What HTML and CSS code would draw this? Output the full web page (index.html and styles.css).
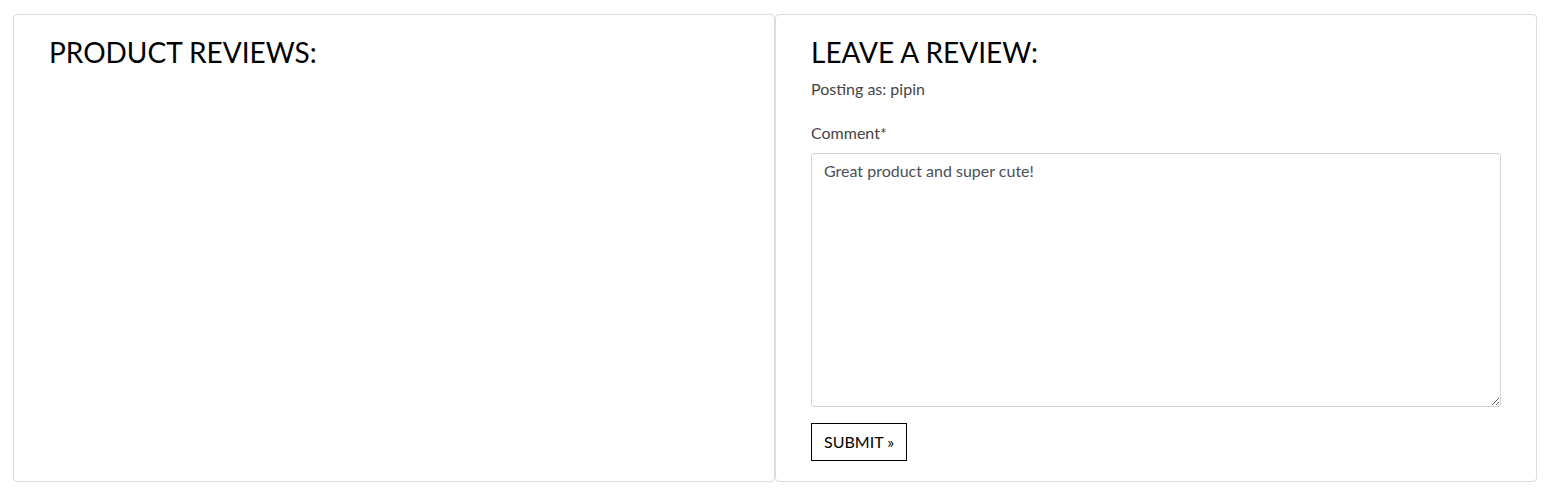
FILE: index.html
```html
<!DOCTYPE html>
<html lang="en">
<head>
<meta charset="utf-8">
<title>Reviews</title>
<link rel="stylesheet" href="styles.css">
</head>
<body>
<div class="wrap">
  <section class="card">
    <h2 class="title">PRODUCT REVIEWS:</h2>
  </section>
  <section class="card">
    <h2 class="title">LEAVE A REVIEW:</h2>
    <p class="posting">Posting as: pipin</p>
    <form class="form">
      <label class="label" for="comment">Comment*</label>
      <textarea id="comment" class="textarea">Great product and super cute!</textarea>
      <button type="button" class="btn">SUBMIT &raquo;</button>
    </form>
  </section>
</div>
</body>
</html>
```
FILE: styles.css
```css
* { box-sizing: border-box; }
html, body { margin: 0; padding: 0; background: #fff; }
body {
  font-family: Lato, "Open Sans", sans-serif;
  font-size: 16px;
  line-height: 1.5;
  color: #444;
}
.wrap {
  display: grid;
  grid-template-columns: 762px 762px;
  padding: 14px 13px;
}
.card {
  border: 1px solid #dcdcdc;
  border-radius: 4px;
  padding: 21px 35px 20px;
}
.title {
  margin: 0;
  font-size: 28px;
  line-height: 1.2;
  font-weight: 400;
  color: #000;
}
.posting {
  margin: 7px 0 0;
}
.form {
  display: flex;
  flex-direction: column;
  align-items: flex-start;
  margin-top: 20px;
}
.label {
  display: block;
  margin-bottom: 8px;
}
.textarea {
  display: block;
  width: 100%;
  height: 254px;
  border: 1px solid #ced4da;
  border-radius: 3px;
  padding: 5px 12px;
  font-family: inherit;
  font-size: 16px;
  line-height: 1.5;
  color: #495057;
  margin: 0 0 16px;
  resize: vertical;
}
.btn {
  font-family: inherit;
  font-size: 16px;
  line-height: 1.5;
  color: #000;
  background: #fff;
  border: 1px solid #000;
  border-radius: 0;
  padding: 0 12px;
  height: 38px;
  min-width: 96px;
  white-space: nowrap;
  cursor: pointer;
}
```
